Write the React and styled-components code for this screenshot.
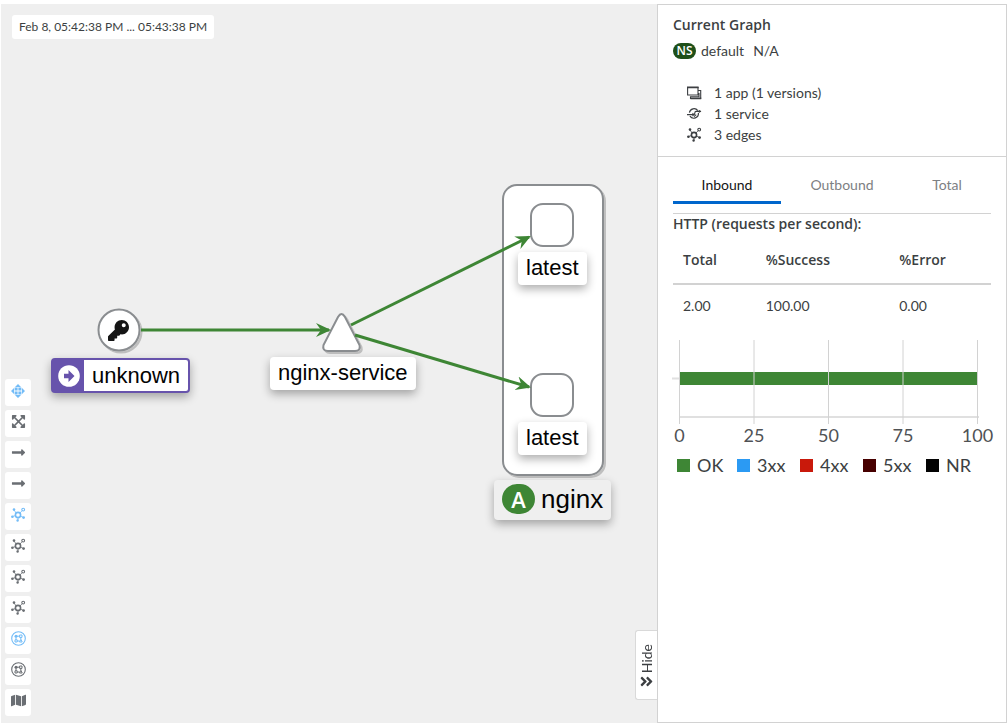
import React from "react";
import styled, { createGlobalStyle } from "styled-components";
import {
  FaAngleDoubleRight,
  FaExpandArrowsAlt,
  FaKey,
  FaLongArrowAltRight,
  FaMap,
} from "react-icons/fa";

const GlobalStyle = createGlobalStyle`
  * { box-sizing: border-box; }
  body {
    margin: 0;
    background: #fff;
    color: #3c3f42;
    font-family: Lato, "Open Sans", sans-serif;
    font-size: 14px;
    line-height: 21px;
  }
  button { font: inherit; color: inherit; border: 0; padding: 0; cursor: pointer; }
`;

const Page = styled.div`
  display: grid;
  grid-template-columns: 1fr 350px;
  min-height: 100vh;
  padding: 4px 1px 3px;
`;

const GraphArea = styled.main`
  position: relative;
  display: flex;
  flex-direction: column;
  justify-content: space-between;
  align-items: flex-start;
  background: #efefef;
  overflow: hidden;
`;

const TimeRange = styled.time`
  position: relative;
  margin: 11px;
  padding: 0 7px;
  border-radius: 3px;
  background: #fff;
  font-size: 12px;
  line-height: 24px;
`;

const Toolbar = styled.div`
  position: relative;
  display: flex;
  flex-direction: column;
  gap: 4px;
  padding: 0 4px 7px;
`;

const ToolButton = styled.button`
  display: flex;
  align-items: center;
  justify-content: center;
  width: 26px;
  height: 27px;
  padding-bottom: 4px;
  border-radius: 3px;
  background: #fff;
  color: ${(p) => (p.$active ? "#73bcf7" : "#6a6e73")};
`;

const Canvas = styled.div`
  position: absolute;
  inset: 0;
  font-family: "Liberation Sans", Arial, sans-serif;
`;

const Drawing = styled.svg`
  display: block;
  width: 100%;
  height: 100%;
`;

const NodeLabel = styled.div`
  position: absolute;
  left: ${(p) => p.$x}px;
  top: ${(p) => p.$y}px;
  display: flex;
  align-items: center;
  padding: 0 8px 2px;
  border-radius: 4px;
  background: #fff;
  box-shadow: 0 4px 10px rgba(3, 3, 3, 0.32);
  color: #030303;
  font-size: 22px;
  line-height: 31px;
`;

const SourceLabel = styled(NodeLabel)`
  padding: 0 8px 0 0;
  gap: 8px;
  border: 2px solid #6753ac;
`;

const SourceBadge = styled.span`
  display: flex;
  align-self: stretch;
  align-items: center;
  justify-content: center;
  width: 31px;
  background: #6753ac;
`;

const AppLabel = styled(NodeLabel)`
  gap: 6px;
  background: #efefef;
  font-size: 26px;
  line-height: 38px;
`;

const AppBadge = styled.span`
  width: 33px;
  height: 30px;
  border-radius: 16px;
  background: #3e8635;
  color: #fff;
  font: 600 22px/30px "Open Sans", sans-serif;
  text-align: center;
`;

const HideTab = styled.button`
  position: absolute;
  right: 0;
  bottom: 23px;
  display: flex;
  flex-direction: column;
  align-items: center;
  justify-content: flex-end;
  gap: 1px;
  width: 22px;
  height: 70px;
  padding-bottom: 10px;
  border: 1px solid #d9d9d9;
  border-right: 0;
  border-radius: 3px 0 0 3px;
  background: #fff;
`;

const HideText = styled.span`
  writing-mode: vertical-rl;
  transform: rotate(180deg);
`;

const Panel = styled.aside`
  border: 1px solid #d2d2d2;
  background: #fff;
`;

const Summary = styled.section`
  padding: 9px 15px 11px;
  border-bottom: 1px solid #d2d2d2;
`;

const Title = styled.h2`
  margin: 0;
  font: 600 14px/21px "Open Sans", sans-serif;
`;

const Namespace = styled.div`
  display: flex;
  align-items: center;
  gap: 5px;
  margin: 5px 0 21px;
`;

const NamespaceBadge = styled.span`
  width: 23px;
  border-radius: 8px;
  background: #1e4f18;
  color: #fff;
  font: 600 12px/16px "Open Sans", sans-serif;
  text-align: center;
`;

const Health = styled.span`
  margin-left: 4px;
`;

const Counts = styled.ul`
  margin: 0;
  padding: 0 14px;
  list-style: none;
`;

const Count = styled.li`
  display: flex;
  align-items: center;
  gap: 12px;
  height: 21px;
`;

const Traffic = styled.section`
  padding: 8px 15px;
`;

const Tabs = styled.div`
  display: flex;
  margin-bottom: 9px;
`;

const Tab = styled.button`
  flex: ${(p) => p.$share} 1 0;
  height: 39px;
  padding-top: 2px;
  background: none;
  border-bottom: 3px solid ${(p) => (p.$current ? "#06c" : "transparent")};
  color: ${(p) => (p.$current ? "#151515" : "#7d8083")};
`;

const Heading = styled.h3`
  margin: 0;
  border-top: 1px solid #d2d2d2;
  font: 600 14px/20px "Open Sans", sans-serif;
`;

const Rates = styled.table`
  width: 100%;
  table-layout: fixed;
  border-collapse: collapse;
  text-align: left;
`;

const RateHead = styled.th`
  width: ${(p) => p.$width};
  height: 50px;
  padding: 2px 10px 0;
  border-bottom: 2px solid #d2d2d2;
  font-family: "Open Sans", sans-serif;
  font-weight: 600;
`;

const RateCell = styled.td`
  height: 43px;
  padding: 0 10px 2px;
`;

const Chart = styled.svg`
  display: block;
  width: 100%;
  margin-top: 13px;
  overflow: visible;
  font-size: 18px;
`;

const Legend = styled.ul`
  display: grid;
  grid-template-columns: 60px 63px 63px 63px 1fr;
  margin: 4px 0 0;
  padding: 0 4px;
  list-style: none;
  font-size: 18px;
  line-height: 24px;
`;

const LegendItem = styled.li`
  display: flex;
  align-items: center;
  gap: 7px;
`;

const Swatch = styled.span`
  width: 13px;
  height: 13px;
  background: ${(p) => p.$color};
`;

const TopologyIcon = () => (
  <svg width="15" height="15" viewBox="0 0 15 15" fill="currentColor" aria-hidden="true">
    <circle cx="7" cy="8" r="2.6" fill="none" stroke="currentColor" strokeWidth="1.6" />
    <circle cx="12.2" cy="2.6" r="1.4" fill="none" stroke="currentColor" strokeWidth="1.1" />
    <path d="M3 3 5.2 6M11.2 3.6 9 6M1.4 9.5 4.4 8.6M9.6 9.2 12.4 10.4M7 10.6V13" fill="none" stroke="currentColor" strokeWidth="0.8" />
    <circle cx="3" cy="2.6" r="1.3" />
    <circle cx="1.4" cy="9.8" r="1.3" />
    <circle cx="12.6" cy="10.6" r="1.4" />
    <circle cx="6.6" cy="13.5" r="1.2" />
  </svg>
);

const MoveIcon = () => (
  <svg width="14" height="14" viewBox="0 0 14 14" fill="currentColor" aria-hidden="true">
    <path d="M7 0 10 3H4ZM7 14 4 11H10ZM0 7 3 4V10ZM14 7 11 10V4Z" />
    <path d="M3.600 3.600h3v3h-3ZM7.400 3.600h3v3h-3ZM3.600 7.400h3v3h-3ZM7.400 7.400h3v3h-3Z" />
  </svg>
);

const NamespaceLayoutIcon = () => (
  <svg width="15" height="15" viewBox="0 0 15 15" fill="none" stroke="currentColor" aria-hidden="true">
    <circle cx="7.5" cy="7.5" r="6.8" strokeWidth="1.1" />
    <circle cx="5" cy="5.200" r="1.500" fill="currentColor" stroke="none" />
    <path d="M8.600 4h2.400v2.400H8.600ZM4 8.800h2.200v2.200H4ZM9.900 8.400 11.200 11H8.500ZM6 5.200h2.400M5 6.400v2.400M9.800 6.400v2M6.200 10h2.400" />
  </svg>
);

const AppsIcon = () => (
  <svg width="15" height="14" viewBox="0 0 15 14" fill="none" stroke="currentColor" aria-hidden="true">
    <path d="M.6 1.500H11V9H.6ZM11 4.500H13.700V12.500H3.500V10.800H12V7" strokeWidth="1.100" />
    <path d="M0 1.300H11.600M3.500 12.300H14.200" strokeWidth="1.800" />
  </svg>
);

const ServiceIcon = () => (
  <svg width="15" height="14" viewBox="0 0 15 14" fill="none" stroke="currentColor" strokeWidth="1.2" aria-hidden="true">
    <path d="M2.400 5.600A4.700 4.700 0 0 1 10.800 3.600M11.400 6A4.700 4.700 0 0 1 2.900 9.200" />
    <path d="M0 7.600H6.800C8.600 7.600 7 4.400 9 4.400H14M9.200 7.600 7 9.600" />
    <path d="M11.800 2.800 14.400 4.400 11.800 6Z" fill="currentColor" stroke="none" />
    <path d="M5.400 5.800 8 7.600 5.400 9.400Z" fill="currentColor" stroke="none" />
  </svg>
);

const SourceIcon = () => (
  <svg width="22" height="22" viewBox="0 0 22 22" aria-hidden="true">
    <circle cx="11" cy="11" r="10.800" fill="#fff" />
    <path d="M6 8.800H10.500V5L16.500 11 10.500 17V13.200H6Z" fill="#6753ac" />
  </svg>
);

const tools = [
  { label: "Drag", icon: <MoveIcon />, active: true },
  { label: "Zoom to fit", icon: <FaExpandArrowsAlt size={15} /> },
  { label: "Hide healthy edges", icon: <FaLongArrowAltRight size={15} /> },
  { label: "Hide idle edges", icon: <FaLongArrowAltRight size={15} /> },
  { label: "Layout default", icon: <TopologyIcon />, active: true },
  { label: "Layout 1", icon: <TopologyIcon /> },
  { label: "Layout 2", icon: <TopologyIcon /> },
  { label: "Layout 3", icon: <TopologyIcon /> },
  { label: "Namespace layout 1", icon: <NamespaceLayoutIcon />, active: true },
  { label: "Namespace layout 2", icon: <NamespaceLayoutIcon /> },
  { label: "Legend", icon: <FaMap size={15} /> },
];

const counts = [
  { icon: <AppsIcon />, text: "1 app (1 versions)" },
  { icon: <ServiceIcon />, text: "1 service" },
  { icon: <TopologyIcon />, text: "3 edges" },
];

const legend = [
  { name: "OK", color: "#3e8635" },
  { name: "3xx", color: "#2b9af3" },
  { name: "4xx", color: "#c9190b" },
  { name: "5xx", color: "#470000" },
  { name: "NR", color: "#030303" },
];

const ticks = [0, 25, 50, 75, 100];

const ServiceGraph = () => (
  <Canvas>
    <Drawing aria-label="Service graph">
      <defs>
        <filter id="node-shadow" x="-20%" y="-20%" width="150%" height="150%">
          <feDropShadow dx="2" dy="2" stdDeviation="0.5" floodColor="#000" floodOpacity="0.2" />
        </filter>
        <marker id="vee" markerUnits="userSpaceOnUse" markerWidth="15" markerHeight="16" refX="13" refY="8" orient="auto">
          <path d="M0 1 15 8 0 15 5 8Z" fill="#3e8635" />
        </marker>
      </defs>
      <g fill="#fff" stroke="#8a8d90" strokeWidth="2" filter="url(#node-shadow)">
        <rect x="502" y="181" width="100" height="290" rx="14" />
        <rect x="530" y="200" width="42" height="42" rx="12" />
        <rect x="530" y="370" width="42" height="42" rx="12" />
        <circle cx="118" cy="326" r="20.5" />
        <path d="M337 313Q340.500 307 344 313L358.500 341Q360 347 354 347H327Q321 347 322.500 341Z" />
      </g>
      <g fill="none" stroke="#3e8635" strokeWidth="3">
        <path d="M140 326H328" markerEnd="url(#vee)" />
        <path d="M350 321 528 233" markerEnd="url(#vee)" />
        <path d="M354 331 528 383" markerEnd="url(#vee)" />
      </g>
      <FaKey x="107" y="316" size={21} color="#151515" />
    </Drawing>
    <SourceLabel $x={50} $y={354}>
      <SourceBadge>
        <SourceIcon />
      </SourceBadge>
      unknown
    </SourceLabel>
    <NodeLabel $x={269} $y={353}>nginx-service</NodeLabel>
    <NodeLabel $x={517} $y={248}>latest</NodeLabel>
    <NodeLabel $x={517} $y={418}>latest</NodeLabel>
    <AppLabel $x={493} $y={476}>
      <AppBadge>A</AppBadge>
      nginx
    </AppLabel>
  </Canvas>
);

const ResponseChart = () => (
  <Chart viewBox="0 0 318 109" aria-label="Response codes">
    <path d="M-1 38.500H6M6 77H306" stroke="#e0e0e0" strokeWidth="2" />
    <rect x="7" y="32" width="298" height="13" fill="#3e8635" />
    {ticks.map((tick) => {
      const x = 6.5 + tick * 2.98;
      return (
        <g key={tick}>
          <path d={`M${x} 0V84`} stroke="#d2d2d2" strokeWidth="1" />
          <text x={x} y="102" fill="#4f5255" textAnchor="middle">{tick}</text>
        </g>
      );
    })}
  </Chart>
);

export default function App() {
  return (
    <>
      <GlobalStyle />
      <Page>
        <GraphArea>
          <ServiceGraph />
          <TimeRange>Feb 8, 05:42:38 PM ... 05:43:38 PM</TimeRange>
          <Toolbar>
            {tools.map((tool) => (
              <ToolButton key={tool.label} aria-label={tool.label} $active={tool.active}>
                {tool.icon}
              </ToolButton>
            ))}
          </Toolbar>
          <HideTab>
            <HideText>Hide</HideText>
            <FaAngleDoubleRight size={15} />
          </HideTab>
        </GraphArea>
        <Panel>
          <Summary>
            <Title>Current Graph</Title>
            <Namespace>
              <NamespaceBadge>NS</NamespaceBadge>
              default
              <Health>N/A</Health>
            </Namespace>
            <Counts>
              {counts.map((count) => (
                <Count key={count.text}>
                  {count.icon}
                  {count.text}
                </Count>
              ))}
            </Counts>
          </Summary>
          <Traffic>
            <Tabs role="tablist">
              <Tab role="tab" aria-selected="true" $current $share={108}>Inbound</Tab>
              <Tab role="tab" aria-selected="false" $share={122}>Outbound</Tab>
              <Tab role="tab" aria-selected="false" $share={88}>Total</Tab>
            </Tabs>
            <Heading>HTTP (requests per second):</Heading>
            <Rates>
              <thead>
                <tr>
                  <RateHead $width="26%">Total</RateHead>
                  <RateHead $width="42%">%Success</RateHead>
                  <RateHead $width="32%">%Error</RateHead>
                </tr>
              </thead>
              <tbody>
                <tr>
                  <RateCell>2.00</RateCell>
                  <RateCell>100.00</RateCell>
                  <RateCell>0.00</RateCell>
                </tr>
              </tbody>
            </Rates>
            <ResponseChart />
            <Legend>
              {legend.map((item) => (
                <LegendItem key={item.name}>
                  <Swatch $color={item.color} />
                  {item.name}
                </LegendItem>
              ))}
            </Legend>
          </Traffic>
        </Panel>
      </Page>
    </>
  );
}
